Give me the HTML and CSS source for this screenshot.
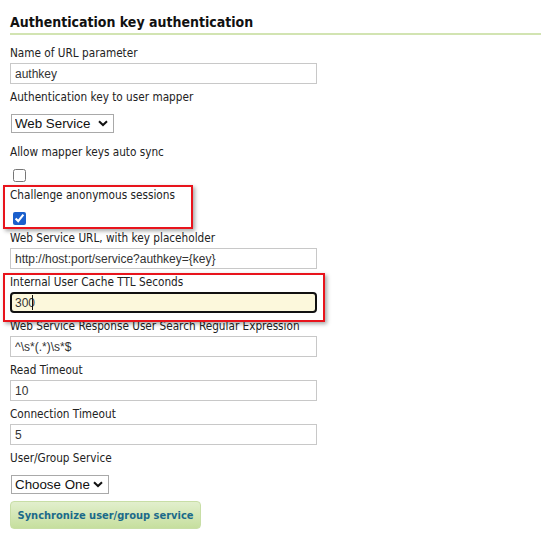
FILE: index.html
```html
<!DOCTYPE html>
<html>
<head>
<meta charset="utf-8">
<link rel="stylesheet" href="styles.css">
</head>
<body>
<div class="panel">
  <h3 class="title">Authentication key authentication</h3>

  <div class="field">
    <label class="lbl">Name of URL parameter</label>
    <input class="txt" type="text" value="authkey">
  </div>

  <div class="field">
    <label class="lbl">Authentication key to user mapper</label>
    <div class="sel" style="width:103px">
      <select class="sel-input"><option>Web Service</option></select>
      <svg class="chev" width="10" height="7" viewBox="0 0 10 7"><path d="M1 1.2 L5 5 L9 1.2" fill="none" stroke="#111" stroke-width="2"/></svg>
    </div>
  </div>

  <div class="field">
    <label class="lbl">Allow mapper keys auto sync</label>
    <div class="chk-row"><input class="chk" type="checkbox"></div>
  </div>

  <div class="field marked mark-a">
    <label class="lbl">Challenge anonymous sessions</label>
    <div class="chk-row"><input class="chk" type="checkbox" checked></div>
  </div>

  <div class="field">
    <label class="lbl">Web Service URL, with key placeholder</label>
    <input class="txt" type="text" value="http://host:port/service?authkey={key}">
  </div>

  <div class="field marked mark-b">
    <label class="lbl">Internal User Cache TTL Seconds</label>
    <div class="focus-wrap">
      <input class="txt txt-focus" type="text" value="300">
      <span class="caret"></span>
    </div>
  </div>

  <div class="field">
    <label class="lbl">Web Service Response User Search Regular Expression</label>
    <input class="txt" type="text" value="^\s*(.*)\s*$">
  </div>

  <div class="field">
    <label class="lbl">Read Timeout</label>
    <input class="txt" type="text" value="10">
  </div>

  <div class="field">
    <label class="lbl">Connection Timeout</label>
    <input class="txt" type="text" value="5">
  </div>

  <div class="field field-last">
    <label class="lbl">User/Group Service</label>
    <div class="sel" style="width:98px">
      <select class="sel-input"><option>Choose One</option></select>
      <svg class="chev" width="10" height="7" viewBox="0 0 10 7"><path d="M1 1.2 L5 5 L9 1.2" fill="none" stroke="#111" stroke-width="2"/></svg>
    </div>
  </div>

  <button class="btn" type="button">Synchronize user/group service</button>
</div>
</body>
</html>
```

FILE: styles.css
```css
html, body {
  margin: 0;
  padding: 0;
  background: #fff;
}
body {
  padding: 0 1px 0 10px;
  font-family: "DejaVu Sans Condensed", "DejaVu Sans", sans-serif;
  font-size: 11.7px;
  color: #222;
}
.panel {
  display: flex;
  flex-direction: column;
  align-items: flex-start;
  padding-top: 13px;
}
.title {
  align-self: stretch;
  margin: 0 0 11px 0;
  font-size: 14px;
  font-weight: bold;
  color: #111;
  line-height: 19px;
  border-bottom: 2px solid #d2e4b2;
  padding-bottom: 1px;
}
.field {
  display: flex;
  flex-direction: column;
  align-items: flex-start;
  margin-bottom: 6px;
}
.lbl {
  display: block;
  line-height: 14px;
  margin-bottom: 3px;
}
.txt {
  box-sizing: border-box;
  width: 307px;
  height: 21px;
  margin: 0;
  padding: 0 4px;
  border: 1px solid #c8c8c8;
  font-family: "Liberation Sans", Arial, sans-serif;
  font-size: 12px;
  color: #333;
  background: #fff;
  outline: none;
}
.focus-wrap {
  position: relative;
}
.txt-focus {
  border: 2px solid #111;
  border-radius: 4px;
  background: #fcf8dc;
  padding: 0 3px;
}
.caret {
  position: absolute;
  left: 22px;
  top: 3px;
  width: 1px;
  height: 15px;
  background: #111;
}
.sel {
  position: relative;
  margin-top: 7px;
  margin-bottom: 6px;
  margin-left: 1px;
}
.field-last .sel {
  margin-bottom: 0;
}
.sel-input {
  -webkit-appearance: none;
  appearance: none;
  box-sizing: border-box;
  width: 100%;
  height: 19px;
  margin: 0;
  padding: 0 0 0 3px;
  border: 1px solid #a9a9a9;
  border-radius: 0;
  background: #fff;
  font-family: "Liberation Sans", Arial, sans-serif;
  font-size: 13.333px;
  color: #111;
  outline: none;
}
.chev {
  position: absolute;
  right: 6px;
  top: 6px;
  pointer-events: none;
}
.chk-row {
  display: flex;
  padding-top: 4px;
}
.chk {
  width: 13px;
  height: 13px;
  margin: 3px 0 0 3px;
  accent-color: #1a5fcc;
}
.marked {
  position: relative;
}
.marked::after {
  content: "";
  position: absolute;
  border: 2px solid #e8141c;
  box-shadow: 2px 2px 4px rgba(0, 0, 0, 0.35);
  pointer-events: none;
}
.mark-a::after {
  left: -7px;
  top: -3px;
  width: 186px;
  height: 40px;
}
.mark-b::after {
  left: -7px;
  top: -2px;
  width: 318px;
  height: 45px;
}
.btn {
  margin-top: 1px;
  box-sizing: border-box;
  width: 191px;
  height: 28px;
  padding: 0;
  border: 1px solid #c8dea6;
  border-radius: 4px;
  background: linear-gradient(#e2efcd, #c6df9e);
  font-family: "DejaVu Sans Condensed", "DejaVu Sans", sans-serif;
  font-size: 11px;
  font-weight: bold;
  color: #1b6a8a;
  text-align: center;
}
```
